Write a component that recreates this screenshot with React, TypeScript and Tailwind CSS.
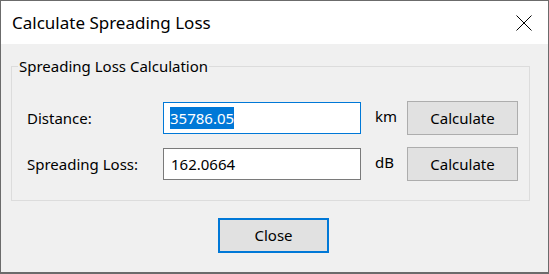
import React from "react";

const font = { fontFamily: '"Noto Sans", "Open Sans", sans-serif' };

function Row({ label, value, unit, selected }: { label: string; value: string; unit: string; selected?: boolean }) {
  return (
    <div className="flex items-center pl-[15px]">
      <div className="w-[136px] text-[15px] leading-[20px] text-black">{label}</div>
      <div
        className={
          selected
            ? "flex h-[32px] w-[198px] items-center border border-[#0078d7] bg-white pl-[6px] text-[15px] text-black"
            : "flex h-[32px] w-[198px] items-center border border-[#7a7a7a] bg-white pl-[7px] text-[15px] text-black"
        }
      >
        {selected ? (
          <span className="bg-[#0078d7] leading-[22px] text-white">{value}</span>
        ) : (
          <span className="leading-[22px]">{value}</span>
        )}
      </div>
      <div className="ml-[14px] -mt-[4px] w-[32px] text-[15px] leading-[20px] text-black">{unit}</div>
      <button
        type="button"
        className="h-[34px] w-[111px] border border-[#adadad] bg-[#e1e1e1] text-[15px] text-black"
      >
        Calculate
      </button>
    </div>
  );
}

export default function App() {
  return (
    <div
      className="flex h-[274px] w-[549px] flex-col border border-[#6b6b6b] border-b-2 bg-[#f0f0f0]"
      style={font}
    >
      <div className="flex h-[43px] shrink-0 items-center justify-between bg-white pl-[11px] pr-[16px]">
        <span className="text-[17px] text-black">Calculate Spreading Loss</span>
        <svg width="16" height="16" viewBox="0 0 16 16" className="text-black">
          <path d="M0.5 0.5 L15.5 15.5 M15.5 0.5 L0.5 15.5" stroke="currentColor" strokeWidth="1" fill="none" />
        </svg>
      </div>

      <div className="ml-[10px] mt-[22px] w-[519px] border border-[#dcdcdc] pb-[19px]">
        <div className="-mt-[11px] ml-[6px] w-fit bg-[#f0f0f0] px-[1px] text-[15px] leading-[20px] text-black">
          Spreading Loss Calculation
        </div>
        <div className="mt-[25px] flex flex-col gap-[12px]">
          <Row label="Distance:" value="35786.05" unit="km" selected />
          <Row label="Spreading Loss:" value="162.0664" unit="dB" />
        </div>
      </div>

      <button
        type="button"
        className="ml-[217px] mt-[17px] h-[35px] w-[111px] border-2 border-[#0078d7] bg-[#e1e1e1] text-[15px] text-black"
      >
        Close
      </button>
    </div>
  );
}
